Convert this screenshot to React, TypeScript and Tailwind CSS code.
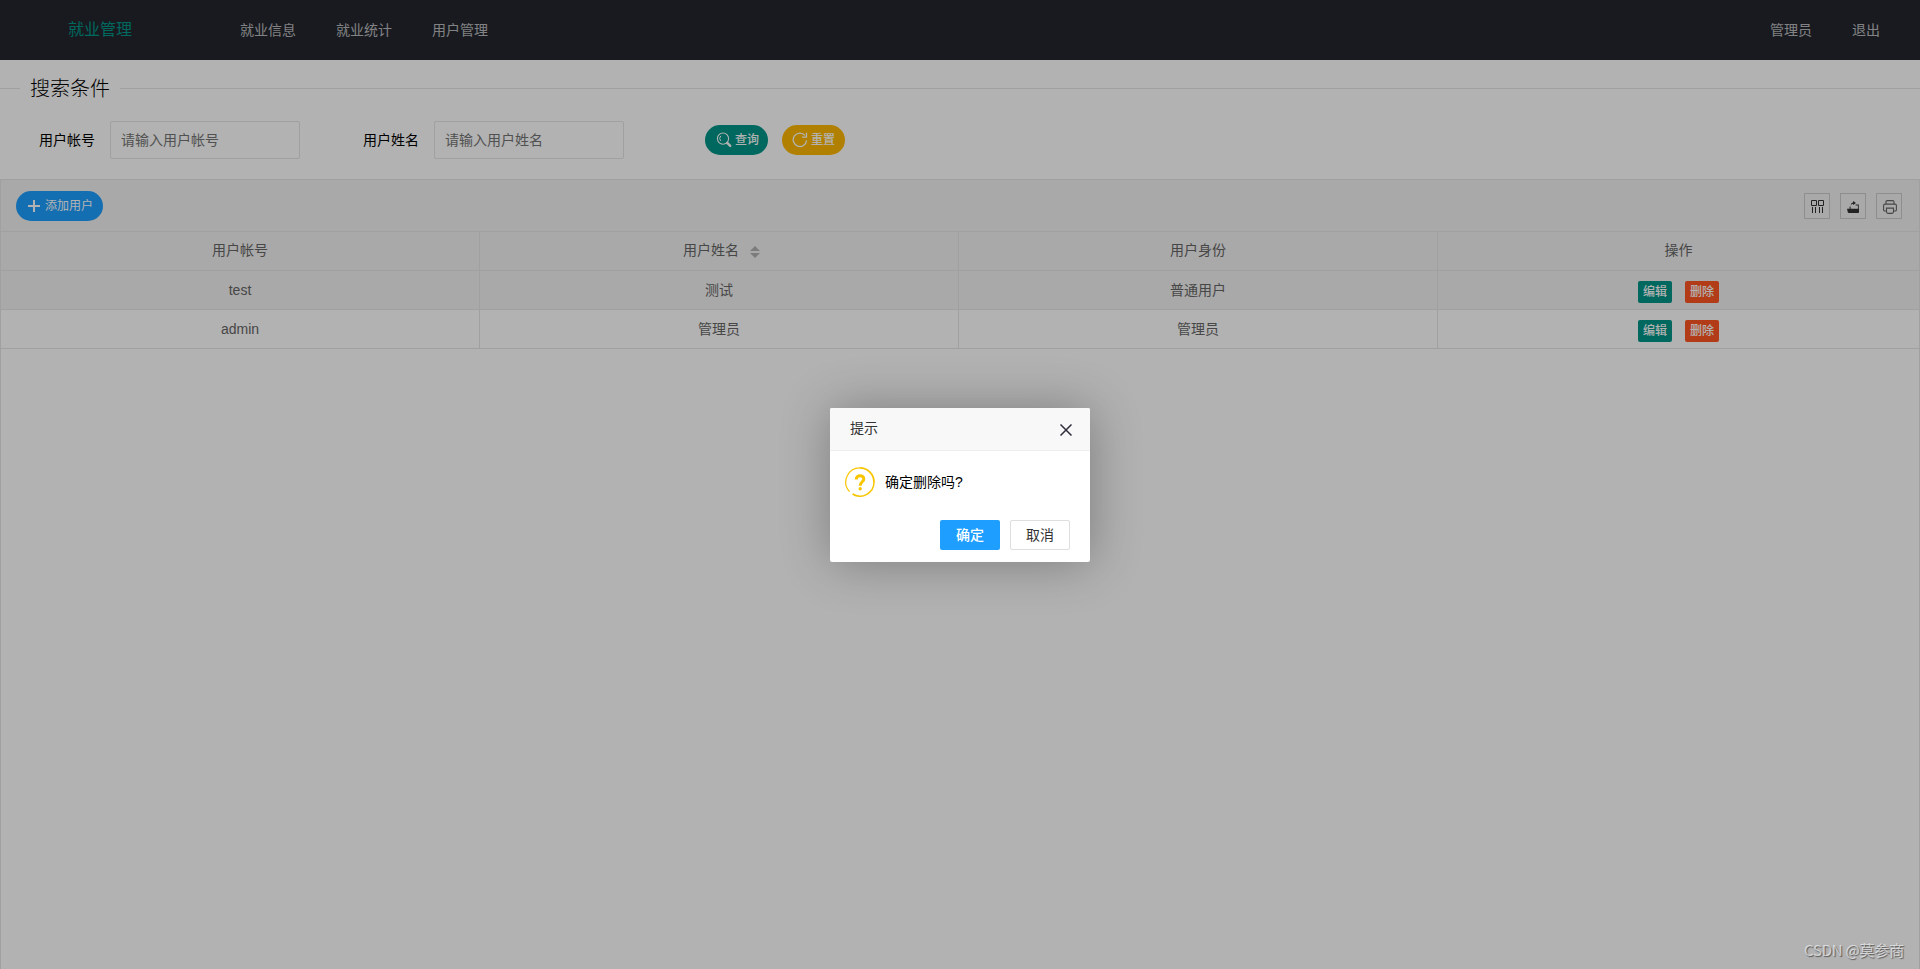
import React from 'react';

type User = { account: string; name: string; role: string };

const users: User[] = [
  { account: 'test', name: '测试', role: '普通用户' },
  { account: 'admin', name: '管理员', role: '管理员' },
];

const NavItem = ({ children }: { children: React.ReactNode }) => (
  <a className="px-5 text-sm leading-[60px] text-white/70">{children}</a>
);

const SearchIcon = () => (
  <svg width="16" height="16" viewBox="0 0 16 16" fill="none" stroke="currentColor">
    <circle cx="7" cy="6.6" r="5.6" strokeWidth="1.1" />
    <path d="M4.800 3.900a3.600 3.600 0 0 0 0 5" strokeWidth="1" />
    <path d="M11.200 10.900l3 3" strokeWidth="2.400" strokeLinecap="round" />
  </svg>
);

const RefreshIcon = () => (
  <svg width="16" height="16" viewBox="0 0 16 16" fill="none" stroke="currentColor" strokeWidth="1.3">
    <path d="M14.6 8.4A6.7 6.7 0 1 1 13 3.4" />
    <path d="M14.500.8v4.400h-4.400" />
  </svg>
);

const PlusIcon = () => (
  <svg width="12" height="12" viewBox="0 0 12 12" stroke="currentColor" strokeWidth="2">
    <path d="M0 6h12M6 0v12" />
  </svg>
);

const ColumnsIcon = () => (
  <svg width="14" height="14" viewBox="0 0 14 14" fill="none" stroke="#333" strokeWidth="1">
    <path d="M.5.5h5v5h-5zM7.500.5h5v5h-5z" />
    <path d="M1.500 7v6M4.500 7v6M8.500 7v6M11.500 7v6" />
  </svg>
);

const ExportIcon = () => (
  <svg width="14" height="14" viewBox="0 0 14 14" fill="#333">
    <path d="M0 8.800h2.600V6.600h1v2.200h7.300V5.500H8.600v-.9h3.200v4.200H12v3.400q0 .8-.8.800H1.800Q1 13 .8 12.200z" />
    <path d="M3.600 5.600Q3.900 2.700 6 2.500V.900L9 2.900 6 5V3.700Q4.600 3.900 3.600 5.600z" />
  </svg>
);

const PrintIcon = () => (
  <svg width="14" height="14" viewBox="0 0 14 14" fill="none" stroke="#666" strokeWidth="1.1">
    <path d="M3 4V2Q3 .6 4.300.6h5.400Q11 .6 11 2v2" />
    <path d="M3 11H1.800Q.6 11 .6 9.700V5.600Q.6 4.100 2 4.100h10q1.400 0 1.400 1.500v4.100Q13.400 11 12.200 11H11" />
    <path d="M3.500 8.100h7v3.700q0 1.600-1.500 1.600H5q-1.500 0-1.500-1.600z" />
  </svg>
);

const QuestionIcon = () => (
  <svg width="30" height="30" viewBox="0 0 30 30" fill="none" stroke="#f8c600">
    <path d="M4.600 24.600A14.100 14.100 0 0 1 15 .9" strokeWidth="1.200" />
    <path d="M15 .9A14.100 14.100 0 0 1 29 15" strokeWidth="1.800" />
    <path d="M29 15A14.100 14.100 0 0 1 7.500 27" strokeWidth="1.500" />
    <path d="M11.200 12.400C11.200 7.400 18.800 7.600 18.800 12C18.800 14.800 15.200 14.800 15.200 18.800" strokeWidth="3" />
    <circle cx="15.200" cy="21.700" r="1.700" fill="#f8c600" stroke="none" />
  </svg>
);

const ToolButton = ({ children }: { children: React.ReactNode }) => (
  <div className="flex size-[26px] items-center justify-center border border-[#ccc] pt-0.5 pl-0.5">{children}</div>
);

const HeadCell = ({ children }: { children: React.ReactNode }) => (
  <th className="h-[39px] border-r border-b border-[#e6e6e6] p-0 pb-0.5 font-normal last:border-r-0">{children}</th>
);

const BodyCell = ({ children }: { children: React.ReactNode }) => (
  <td className="h-[39px] border-r border-b border-[#e6e6e6] p-0 pb-px last:border-r-0">{children}</td>
);

const Field = ({ label, hint }: { label: string; hint: string }) => (
  <div className="flex w-[324px] items-center">
    <label className="w-[95px] text-right text-sm text-black">{label}</label>
    <input
      className="ml-[15px] h-[38px] w-[190px] rounded-[2px] border border-[#e6e6e6] bg-white px-2.5 text-sm placeholder:text-[#757575]"
      placeholder={hint}
    />
  </div>
);

export default function App() {
  return (
    <div className="relative flex h-[969px] w-full flex-col overflow-hidden bg-white font-['Liberation_Sans','Noto_Sans_CJK_SC',sans-serif] text-sm text-[#333]">
      <header className="flex h-[60px] shrink-0 bg-[#23262e]">
        <div className="w-[200px] text-center text-base leading-[59px] text-[#009688]">就业管理</div>
        <nav className="flex pl-5">
          <NavItem>就业信息</NavItem>
          <NavItem>就业统计</NavItem>
          <NavItem>用户管理</NavItem>
        </nav>
        <nav className="ml-auto flex pr-5">
          <NavItem>管理员</NavItem>
          <NavItem>退出</NavItem>
        </nav>
      </header>

      <div className="flex h-[57px] shrink-0 items-center">
        <span className="h-px w-5 bg-[#e6e6e6]" />
        <span className="w-[100px] text-center text-xl font-light text-black">搜索条件</span>
        <span className="h-px flex-1 bg-[#e6e6e6]" />
      </div>

      <div className="flex h-[62px] shrink-0 items-start pt-1">
        <Field label="用户帐号" hint="请输入用户帐号" />
        <Field label="用户姓名" hint="请输入用户姓名" />
        <div className="ml-[57px] flex gap-3.5 pt-1 text-xs text-white">
          <button className="flex h-[30px] w-[63px] items-center gap-[3px] rounded-full bg-[#009688] pl-[11px] font-medium">
            <SearchIcon />
            查询
          </button>
          <button className="flex h-[30px] w-[63px] items-center gap-[3px] rounded-full bg-[#ffb800] pl-2.5 font-medium">
            <RefreshIcon />
            重置
          </button>
        </div>
      </div>

      <main className="flex flex-1 flex-col border border-b-0 border-[#e6e6e6]">
        <div className="flex h-[52px] shrink-0 items-start justify-between border-b border-[#e6e6e6] bg-[#f2f2f2] pr-[17px] pl-[15px]">
          <button className="mt-[11px] flex h-[30px] w-[87px] items-center gap-[5px] rounded-full bg-[#1e9fff] pl-3 text-xs text-white">
            <PlusIcon />
            添加用户
          </button>
          <div className="mt-[13px] flex gap-2.5">
            <ToolButton><ColumnsIcon /></ToolButton>
            <ToolButton><ExportIcon /></ToolButton>
            <ToolButton><PrintIcon /></ToolButton>
          </div>
        </div>
        <table className="w-full table-fixed border-separate border-spacing-0 text-center text-sm text-[#666]">
          <colgroup>
            <col className="w-[479px]" />
            <col className="w-[479px]" />
            <col className="w-[479px]" />
            <col />
          </colgroup>
          <thead className="bg-[#f2f2f2]">
            <tr>
              <HeadCell>用户帐号</HeadCell>
              <HeadCell>
                <div className="flex items-center justify-center gap-[11px] pl-[5px]">
                  用户姓名
                  <svg width="10" height="12" viewBox="0 0 10 12" fill="#b2b2b2" className="mt-[3px]">
                    <path d="M0 5L5 0l5 5zM0 7h10l-5 5z" />
                  </svg>
                </div>
              </HeadCell>
              <HeadCell>用户身份</HeadCell>
              <HeadCell>操作</HeadCell>
            </tr>
          </thead>
          <tbody>
            {users.map((user) => (
              <tr key={user.account} className="odd:bg-[#f2f2f2]">
                <BodyCell>{user.account}</BodyCell>
                <BodyCell>{user.name}</BodyCell>
                <BodyCell>{user.role}</BodyCell>
                <BodyCell>
                  <div className="flex justify-center gap-[13px] pt-1 text-xs font-medium text-white">
                    <button className="h-[22px] w-[34px] rounded-[2px] bg-[#009688] leading-[22px]">编辑</button>
                    <button className="h-[22px] w-[34px] rounded-[2px] bg-[#ff5722] leading-[22px]">删除</button>
                  </div>
                </BodyCell>
              </tr>
            ))}
          </tbody>
        </table>
      </main>

      <div className="absolute inset-0 flex items-start justify-center bg-black/30 pt-[408px]">
        <section className="h-[154px] w-[260px] rounded-[2px] bg-white shadow-[1px_1px_50px_rgba(0,0,0,0.3)]">
          <div className="flex h-[43px] items-center justify-between rounded-t-[2px] border-b border-[#eee] bg-[#f8f8f8] pr-[18px] pl-5 text-[#333]">
            <span className="pb-0.5">提示</span>
            <svg width="12" height="12" viewBox="0 0 12 12" stroke="#2e2d3c" strokeWidth="1.500" className="mt-0.5">
              <path d="M.5.5l11 11M11.500.5l-11 11" />
            </svg>
          </div>
          <div className="flex items-center gap-2.5 pt-4 pl-[15px] text-black">
            <QuestionIcon />
            确定删除吗?
          </div>
          <div className="mt-[23px] flex justify-end gap-2.5 pr-5">
            <button className="h-[30px] w-[60px] rounded-[2px] bg-[#1e9fff] font-medium text-white">确定</button>
            <button className="h-[30px] w-[60px] rounded-[2px] border border-[#dedede] bg-white text-[#333]">取消</button>
          </div>
        </section>
      </div>

      <div className="absolute right-4 bottom-[9px] font-['Noto_Sans_CJK_SC',sans-serif] text-[15px] leading-5 tracking-[-0.2px] text-white/60 [text-shadow:1px_1px_1px_rgba(0,0,0,0.5)]">
        CSDN @莫参商
      </div>
    </div>
  );
}
